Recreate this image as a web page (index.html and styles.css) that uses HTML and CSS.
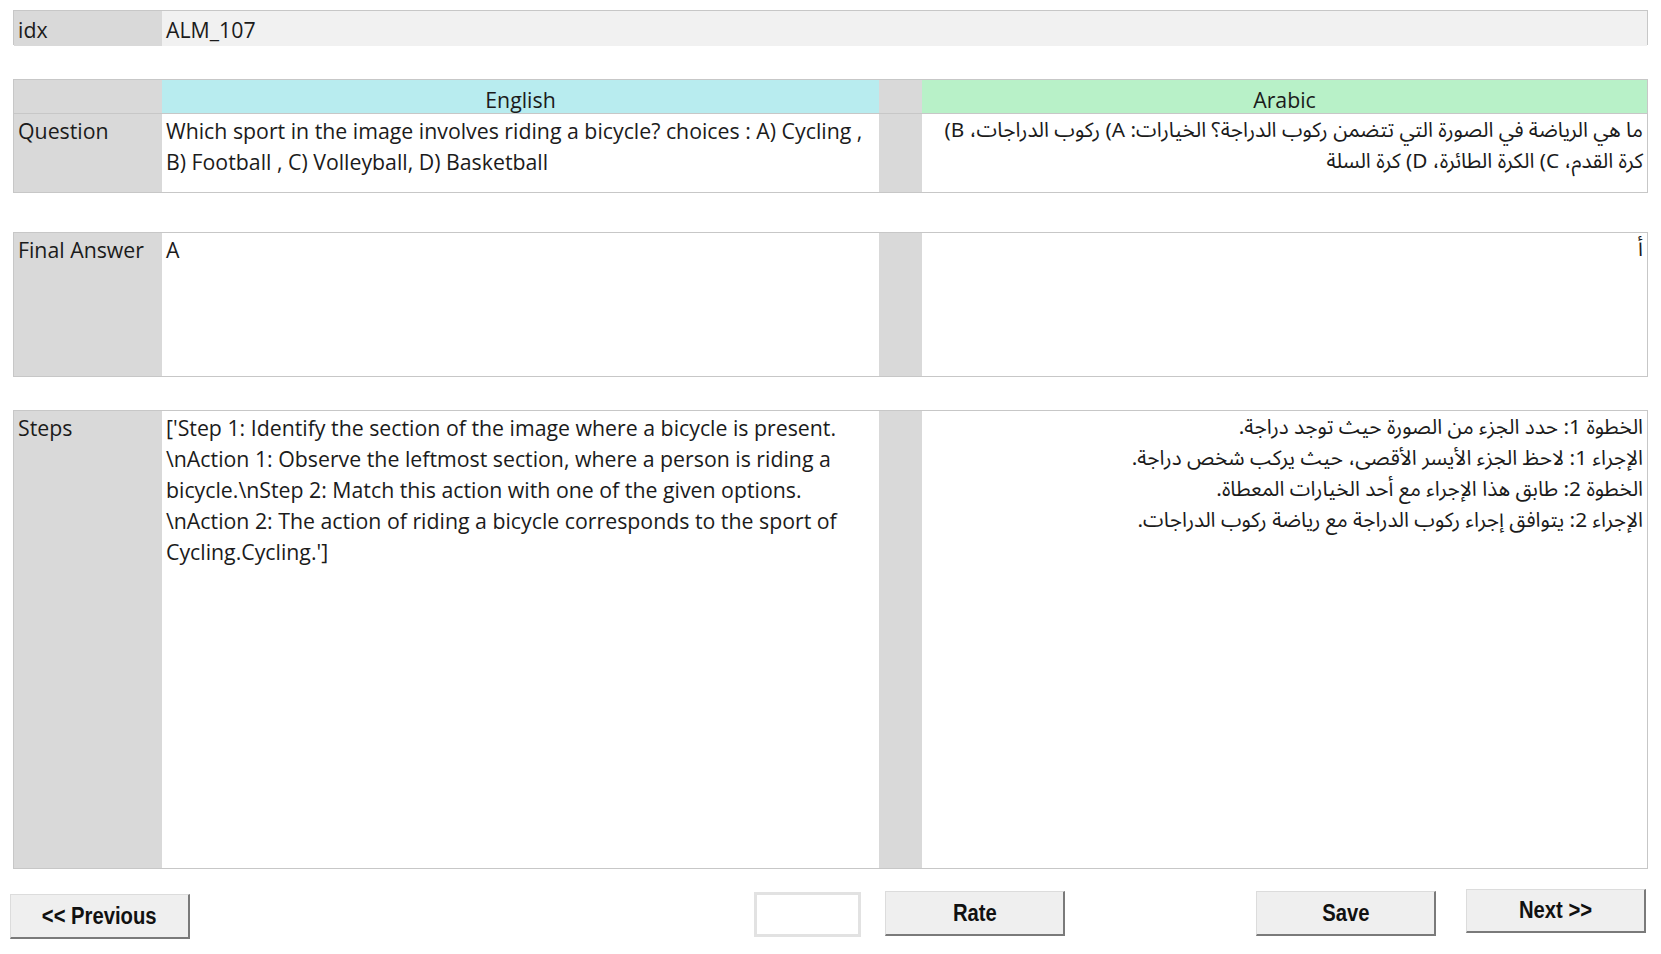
FILE: index.html
```html
<!DOCTYPE html>
<html lang="en">
<head>
<meta charset="utf-8">
<title>ALM_107</title>
<link rel="stylesheet" href="styles.css">
</head>
<body>
<div class="page">
  <div class="idx-row">
    <div class="lbl">idx</div>
    <div class="idx-val">ALM_107</div>
  </div>

  <div class="sheet q-sheet">
    <div class="lbl hdr"></div>
    <div class="hdr hdr-en">English</div>
    <div class="gapcol hdr"></div>
    <div class="hdr hdr-ar">Arabic</div>

    <div class="lbl">Question</div>
    <div class="cell en">Which sport in the image involves riding a bicycle? choices : A) Cycling ,<br>B) Football , C) Volleyball, D) Basketball</div>
    <div class="gapcol"></div>
    <div class="cell ar" dir="rtl">ما هي الرياضة في الصورة التي تتضمن ركوب الدراجة؟ الخيارات: A) ركوب الدراجات، B)<br>كرة القدم، C) الكرة الطائرة، D) كرة السلة</div>
  </div>

  <div class="sheet final-sheet">
    <div class="lbl">Final Answer</div>
    <div class="cell en">A</div>
    <div class="gapcol"></div>
    <div class="cell ar" dir="rtl">أ</div>
  </div>

  <div class="sheet steps-sheet">
    <div class="lbl">Steps</div>
    <div class="cell en">['Step 1: Identify the section of the image where a bicycle is present.<br>\nAction 1: Observe the leftmost section, where a person is riding a<br>bicycle.\nStep 2: Match this action with one of the given options.<br>\nAction 2: The action of riding a bicycle corresponds to the sport of<br>Cycling.Cycling.']</div>
    <div class="gapcol"></div>
    <div class="cell ar" dir="rtl">الخطوة 1: حدد الجزء من الصورة حيث توجد دراجة.<br>الإجراء 1: لاحظ الجزء الأيسر الأقصى، حيث يركب شخص دراجة.<br>الخطوة 2: طابق هذا الإجراء مع أحد الخيارات المعطاة.<br>الإجراء 2: يتوافق إجراء ركوب الدراجة مع رياضة ركوب الدراجات.</div>
  </div>

  <div class="actions">
    <button class="btn btn-prev"><span>&lt;&lt; Previous</span></button>
    <div class="rate-box"></div>
    <button class="btn btn-rate"><span>Rate</span></button>
    <button class="btn btn-save"><span>Save</span></button>
    <button class="btn btn-next"><span>Next &gt;&gt;</span></button>
  </div>
</div>
</body>
</html>
```

FILE: styles.css
```css
* { box-sizing: border-box; }

html, body {
  margin: 0;
  background: #ffffff;
}

.page {
  padding: 10px 13px 0 13px;
  font-family: "Open Sans", "Lato", sans-serif;
  font-size: 21.3px;
  color: #1b1b1b;
}

.idx-row {
  display: grid;
  grid-template-columns: 148px 1fr;
  height: 35px;
  border: 1px solid #c7c7c7;
  background: #f1f1f1;
}

.idx-row > div {
  line-height: 33px;
  padding: 2px 4px 0 4px;
}

.lbl {
  background: #d9d9d9;
  padding: 1px 4px 0 4px;
  line-height: 31px;
}

.idx-val {
  background: #f1f1f1;
}

.sheet {
  display: grid;
  grid-template-columns: 148px 717px 43px 1fr;
  border: 1px solid #c7c7c7;
}

.q-sheet {
  margin-top: 34px;
  grid-template-rows: 34px 78px;
}

.final-sheet {
  margin-top: 39px;
  height: 145px;
}

.steps-sheet {
  margin-top: 33px;
  height: 459px;
}

.hdr {
  border-bottom: 1px solid #c7c7c7;
  text-align: center;
  line-height: 33px;
  padding: 3px 0 0 0;
}

.hdr-en { background: #b8ecef; }
.hdr-ar { background: #b8f1c8; }

.gapcol {
  background: #d9d9d9;
}

.cell {
  background: #ffffff;
  padding: 1px 4px 0 4px;
  line-height: 31px;
  white-space: nowrap;
}

.cell.ar {
  font-family: "Noto Sans Arabic", "Noto Naskh Arabic", "DejaVu Sans", sans-serif;
  font-size: 20.8px;
  text-align: right;
  padding-right: 4px;
}

.actions {
  display: flex;
  align-items: flex-start;
  margin-top: 20px;
  margin-left: -3px;
}

.btn {
  display: flex;
  align-items: center;
  justify-content: center;
  width: 180px;
  height: 45px;
  padding: 0;
  background: #efefef;
  border-top: 1px solid #dcdcdc;
  border-left: 1px solid #dcdcdc;
  border-right: 2px solid #7a7a7a;
  border-bottom: 2px solid #7a7a7a;
  font-family: "Liberation Sans", Arial, sans-serif;
  font-weight: bold;
  font-size: 23px;
  color: #111111;
}

.btn span {
  display: inline-block;
  transform: scaleX(0.88);
}

.btn-prev { margin-top: 5px; }

.rate-box {
  width: 107px;
  height: 45px;
  margin-top: 3px;
  margin-left: 564px;
  background: #ffffff;
  border: 3px solid #e2e2e2;
}

.btn-rate { margin-top: 2px; margin-left: 24px; }
.btn-save { margin-top: 2px; margin-left: 191px; }
.btn-next { margin-top: 0; margin-left: 30px; height: 44px; }
```
